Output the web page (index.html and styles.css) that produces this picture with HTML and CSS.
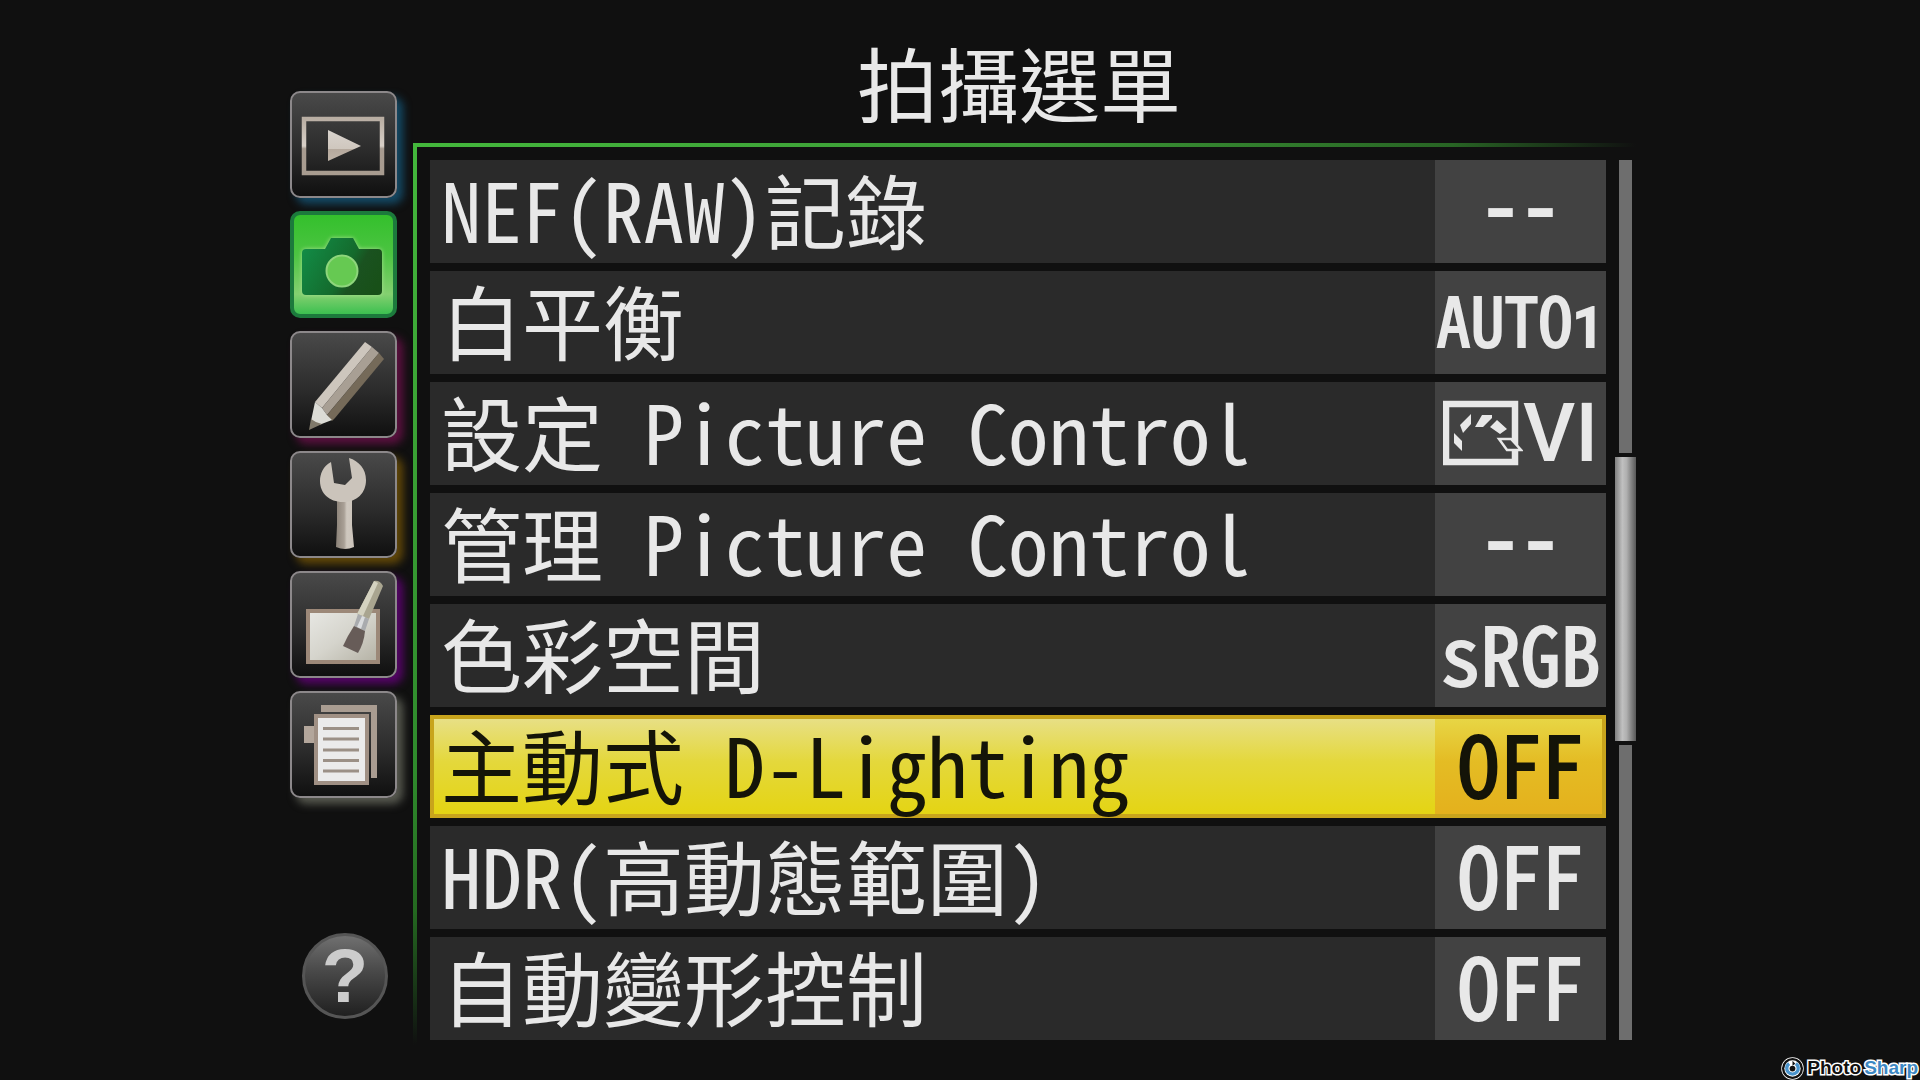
FILE: index.html
```html
<!DOCTYPE html>
<html lang="zh-Hant">
<head>
  <meta charset="UTF-8" />
  <meta name="viewport" content="width=device-width, initial-scale=1.0" />
  <title>拍攝選單</title>
  <link rel="stylesheet" href="styles.css">
</head>
<body>
  <div class="screen">
    <nav class="sidebar">
      <button class="tab tab-playback" type="button" aria-label="播放選單">
        <svg viewBox="0 0 107 107">
          <defs>
            <linearGradient id="metal" x1="0" y1="0" x2="0" y2="1">
              <stop offset="0" stop-color="#b9aea3" />
              <stop offset="0.5" stop-color="#d8d0c8" />
              <stop offset="0.55" stop-color="#a79b90" />
              <stop offset="1" stop-color="#a89c90" />
            </linearGradient>
            <linearGradient id="play" x1="0" y1="0" x2="0" y2="1">
              <stop offset="0" stop-color="#d9d4ce" />
              <stop offset="0.6" stop-color="#cfc7be" />
              <stop offset="0.62" stop-color="#b5a99d" />
              <stop offset="1" stop-color="#c0b5a9" />
            </linearGradient>
          </defs>
          <rect x="14" y="28" width="78" height="54" fill="none" stroke="url(#metal)" stroke-width="4.5" />
          <path d="M38 39 L71 55 L38 70 Z" fill="url(#play)" />
        </svg>
      </button>

      <button class="tab tab-shooting" type="button" aria-label="拍攝選單">
        <svg viewBox="0 0 107 107">
          <defs>
            <linearGradient id="camera" x1="0" y1="0.3" x2="1" y2="0.7">
              <stop offset="0" stop-color="#128a45" />
              <stop offset="0.55" stop-color="#146a2c" />
              <stop offset="0.7" stop-color="#1a5220" />
              <stop offset="1" stop-color="#185018" />
            </linearGradient>
          </defs>
          <path class="camera-glow" d="M16 38 H35 L41 27 H63 L69 38 H88 Q92 38 92 42 V80 Q92 84 88 84 H16 Q12 84 12 80 V42 Q12 38 16 38 Z" fill="url(#camera)" />
          <circle cx="52" cy="60" r="15.5" fill="#66c952" stroke="#8ed67c" stroke-width="2" />
        </svg>
      </button>

      <button class="tab tab-custom" type="button" aria-label="自訂設定選單">
        <svg viewBox="0 0 107 107">
          <path d="M25 71 L75 11 L82 16 L32 77 Z" fill="#cdc6bd" />
          <path d="M32 77 L82 16 L89 22 L37 84 Z" fill="#a89f94" />
          <path d="M37 84 L89 22 L94 28 L45 87 L42 90 Z" fill="#756a59" />
          <path d="M25 71 L32 77 L37 84 L42 89 L29 94 L21 90 Z" fill="#dcdcd6" />
          <path d="M21 88 Q26 92 32 93 L19 99 Z" fill="#80796a" />
        </svg>
      </button>

      <button class="tab tab-setup" type="button" aria-label="設定選單">
        <svg viewBox="0 0 107 107">
          <defs>
            <linearGradient id="handle" x1="0" y1="0" x2="1" y2="0">
              <stop offset="0" stop-color="#8b8278" />
              <stop offset="0.45" stop-color="#a9a096" />
              <stop offset="0.6" stop-color="#cfc8bf" />
              <stop offset="1" stop-color="#cbc3ba" />
            </linearGradient>
          </defs>
          <path d="M47 48 H62 V74 L64 96 Q55 100 46 96 L47 74 Z" fill="url(#handle)" />
          <path d="M41 11 C33 15 30 23 30 30 C30 42 39 51 53 51 C67 51 76 42 76 29 C76 18 69 10 59 7 L62 27 L55 34 L44 32 Z" fill="#cbc4bb" />
        </svg>
      </button>

      <button class="tab tab-retouch" type="button" aria-label="修飾選單">
        <svg viewBox="0 0 107 107">
          <defs>
            <linearGradient id="canvas" x1="0" y1="0" x2="1" y2="1">
              <stop offset="0" stop-color="#e8e8e4" />
              <stop offset="0.5" stop-color="#d5d4cc" />
              <stop offset="1" stop-color="#b4b1a4" />
            </linearGradient>
          </defs>
          <rect x="18" y="40" width="70" height="51" fill="url(#canvas)" stroke="#9c8878" stroke-width="4" />
          <path d="M84 10 Q90 9 93 15 L79 48 L67 43 Z" fill="#a9a590" />
          <path d="M84 10 L88 12 L73 45 L67 43 Z" fill="#d4d2c0" />
          <path d="M68 43 L79 48 L75 60 L64 55 Z" fill="#a9abae" />
          <path d="M72 45 L75 46 L71 58 L67 56 Z" fill="#dadcde" />
          <path d="M64 55 L75 60 Q74 72 68 82 L53 75 Q58 64 64 55 Z" fill="#675c58" />
        </svg>
      </button>

      <button class="tab tab-recent" type="button" aria-label="最近的設定">
        <svg viewBox="0 0 107 107">
          <path d="M31 14 H87 V87 H81 V21 H31 Z" fill="#a99c91" />
          <rect x="14" y="35" width="11" height="17" fill="#b3a69b" />
          <rect x="26" y="25" width="51" height="67" fill="#ebebeb" stroke="#a09084" stroke-width="4" />
          <path d="M33 37.500 H69 M33 48 H69 M33 59 H69 M33 69.500 H69 M33 80 H69" stroke="#9b9086" stroke-width="3" />
        </svg>
      </button>

      <button class="help" type="button" aria-label="說明">?</button>
    </nav>

    <main class="content">
      <h1 class="title">拍攝選單</h1>

      <div class="panel">
        <ul class="menu">
          <li><button class="row" type="button">
            <span class="label">NEF(RAW)記錄</span>
            <span class="value value-none">--</span>
          </button></li>
          <li><button class="row" type="button">
            <span class="label">白平衡</span>
            <span class="value value-auto">AUTO<small>1</small></span>
          </button></li>
          <li><button class="row" type="button">
            <span class="label">設定 Picture Control</span>
            <span class="value value-picture">
              <svg viewBox="0 0 80 68">
                <rect x="3" y="4" width="69" height="58" fill="none" stroke="#e8e8e8" stroke-width="6.500" />
                <path d="M11 33 L19 41 V51 L11 43 Z M17 25 L28 14 V24 L20 33 Z M32 27 L39 15 H49 V18 L40 27 Z M47 27 L54 20 L64 29 L57 34 Z" fill="#e8e8e8" />
                <path d="M56 39 H68 L78 50 H64 Z" fill="#424242" stroke="#e8e8e8" stroke-width="2.500" />
              </svg>VI</span>
          </button></li>
          <li><button class="row" type="button">
            <span class="label">管理 Picture Control</span>
            <span class="value value-none">--</span>
          </button></li>
          <li><button class="row" type="button">
            <span class="label">色彩空間</span>
            <span class="value">sRGB</span>
          </button></li>
          <li><button class="row selected" type="button">
            <span class="label">主動式 D-Lighting</span>
            <span class="value value-off">OFF</span>
          </button></li>
          <li><button class="row" type="button">
            <span class="label">HDR(高動態範圍)</span>
            <span class="value value-off">OFF</span>
          </button></li>
          <li><button class="row" type="button">
            <span class="label">自動變形控制</span>
            <span class="value value-off">OFF</span>
          </button></li>
        </ul>

        <div class="scrollbar">
          <div class="track track-top"></div>
          <div class="thumb"></div>
          <div class="track track-bottom"></div>
        </div>
      </div>
    </main>
  </div>

  <div class="watermark">
    <svg viewBox="0 0 24 24">
      <circle cx="12" cy="12" r="11" fill="#111" stroke="#fff" stroke-width="1.500" />
      <circle cx="12" cy="12" r="8.500" fill="#fff" />
      <path d="M8.500 7 A6 6 0 1 0 15.500 7" fill="none" stroke="#4a94cc" stroke-width="3.500" />
      <path d="M12 4 V9 L15 7 Z" fill="#111" />
      <circle cx="12" cy="12" r="3" fill="#111" />
    </svg>
    <span>Photo</span><span class="blue">Sharp</span>
  </div>
</body>
</html>
```
FILE: styles.css
```css
* { box-sizing: border-box; margin: 0; padding: 0; }
body {
  background: #101010;
  color: #e8e8e8;
  font-family: "Noto Sans Mono CJK TC", "Noto Sans CJK TC", monospace;
  font-feature-settings: "hwid";
  min-height: 100vh;
}
button {
  border: none;
  background: none;
  color: inherit;
  font: inherit;
  font-feature-settings: inherit;
  cursor: pointer;
}
.screen {
  display: flex;
  gap: 16px;
  padding: 0 284px 0 290px;
}

/* left tabs */
.sidebar {
  display: flex;
  flex-direction: column;
  gap: 13px;
  padding-top: 91px;
  width: 107px;
  flex-shrink: 0;
}
.tab {
  height: 107px;
  border: 2px solid #8c888a;
  border-radius: 10px;
  background: linear-gradient(to bottom, #494949, #2c2c2c 55%, #101010);
}
.tab svg {
  display: block;
  width: 107px;
  height: 107px;
  margin: -2px;
}
.tab-playback { box-shadow: 6px 6px 8px #144a66; }
.tab-custom { box-shadow: 6px 6px 8px #5c1040; }
.tab-setup { box-shadow: 6px 6px 8px #624808; }
.tab-retouch { box-shadow: 6px 6px 8px #560468; }
.tab-recent { box-shadow: 6px 6px 8px #585a50; }
.tab-shooting {
  border: 4px solid #1c7a3c;
  background: linear-gradient(to bottom, #34c02c, #4cc442 40%, #84d070 80%, #3cc050);
}
.tab-shooting svg { margin: -4px; }
.camera-glow { filter: drop-shadow(0 0 2px #a8e090); }
.help {
  width: 86px;
  height: 86px;
  margin: 122px 0 0 12px;
  border: 3px solid #555;
  border-radius: 50%;
  background: linear-gradient(to bottom, #707070, #484848 45%, #202020);
  color: #ccc;
  font: bold 76px/80px "Liberation Sans", Arial, sans-serif;
}

/* menu */
.content {
  flex: 1;
  min-width: 0;
}
.title {
  height: 143px;
  padding: 26px 28px 0 17px;
  font-size: 81px;
  font-weight: 400;
  line-height: 110px;
  text-align: center;
}
.panel {
  display: flex;
  gap: 9px;
  padding: 17px 0 5px 17px;
  background:
    linear-gradient(to right, #44b83c, #3c9a36 50%, #286424 85%, transparent) top left / 100% 4px no-repeat,
    linear-gradient(to bottom, #44b83c, #2f8a2c 70%, #246a20 85%, transparent) top left / 4px 100% no-repeat;
}
.menu {
  display: flex;
  flex-direction: column;
  gap: 8px;
  flex: 1;
  min-width: 0;
  list-style: none;
}
.row {
  display: flex;
  width: 100%;
  height: 103px;
  background: #2a2a2a;
  font-size: 81px;
  line-height: 96px;
  text-align: left;
  white-space: nowrap;
}
.label {
  flex: 1;
  padding-left: 11px;
}
.value {
  display: flex;
  justify-content: center;
  width: 171px;
  height: 103px;
  background: #424242;
  font-size: 80px;
  line-height: 94px;
  -webkit-text-stroke: 2px;
}
.value-off { font-size: 84px; }
.value-none {
  font-weight: 700;
  line-height: 82px;
  -webkit-text-stroke: 0;
}
.value-auto {
  align-items: baseline;
  font-size: 68px;
}
.value-auto small {
  font: 500 56px/82px Roboto, sans-serif;
}
.value-picture {
  font: 500 81px/104px Roboto, sans-serif;
  -webkit-text-stroke: 0;
}
.value-picture svg {
  width: 80px;
  height: 68px;
  margin-top: 18px;
}
.selected {
  background: linear-gradient(to bottom, #e8e08c, #e4d83c 45%, #e4d410);
  color: #141408;
  box-shadow: inset 0 0 0 4px #c8a41c;
}
.selected .value {
  background: linear-gradient(to bottom, #e8d848, #e4bc24 45%, #e4b01c);
  box-shadow: inset 0 4px #c8a41c, inset -4px -4px #c8a41c;
}

/* scrollbar */
.scrollbar {
  display: flex;
  flex-direction: column;
  align-items: center;
  gap: 4px;
  width: 21px;
}
.track {
  width: 13px;
  background: #6e6e6e;
}
.track-top { flex: 293; }
.track-bottom { flex: 295; }
.thumb {
  flex: 284;
  width: 21px;
  background: linear-gradient(to right, #808080, #c0c0c0 35%, #b0b0b0 55%, #585858);
}

.watermark {
  position: absolute;
  right: 2px;
  bottom: 0;
  display: flex;
  align-items: center;
  gap: 3px;
  height: 24px;
  color: #111;
  font: bold 19px/24px "Liberation Sans", Arial, sans-serif;
  -webkit-text-stroke: 3px #fff;
  paint-order: stroke fill;
}
.watermark svg {
  width: 23px;
  height: 23px;
}
.watermark .blue { color: #3c88c4; }
```
